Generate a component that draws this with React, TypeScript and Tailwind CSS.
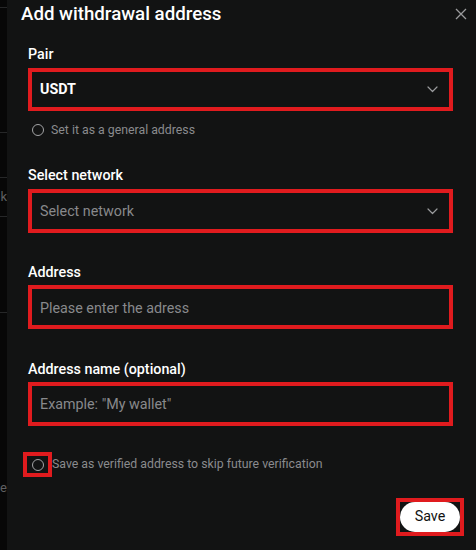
import React from 'react';

const Chevron = () => (
    <svg width="11" height="7" viewBox="0 0 11 7" fill="none" className="shrink-0">
        <path d="M1 1l4.5 4.5L10 1" stroke="#9a9b9d" strokeWidth="1.2" strokeLinecap="round" strokeLinejoin="round" />
    </svg>
);

const Radio = () => <span className="inline-block h-3 w-3 shrink-0 rounded-full border border-[#a3a4a6]" />;

export default function App() {
    return (
        <div className="flex h-[550px] w-[476px] overflow-hidden bg-[#0b0b0b] text-white" style={{ fontFamily: 'Roboto, "Noto Sans", sans-serif' }}>
            {/* page behind the dialog, only a sliver shows */}
            <div className="flex w-[7px] shrink-0 flex-col overflow-hidden bg-[#070707] text-[13px] text-[#5f6062]">
                <div className="h-[8px] border-b border-[#262728]" />
                <div className="h-[125px] border-b border-[#262728]" />
                <div className="h-[45px] border-b border-[#262728]" />
                <div className="flex h-[39px] items-center justify-end border-b border-[#262728]">k</div>
                <div className="h-[96px] border-b border-[#262728]" />
                <div className="flex h-[186px] items-end justify-end pb-[2px]">e</div>
            </div>

            {/* dialog */}
            <div className="flex flex-1 flex-col bg-[#121313]">
                <div className="flex items-start justify-between pl-[14px] pr-[9px]">
                    <h1 className="text-[18.7px] font-medium leading-7">Add withdrawal address</h1>
                    <svg width="12" height="12" viewBox="0 0 12 12" className="mt-[8px]">
                        <path d="M1 1l10 10M11 1L1 11" stroke="#9a9b9d" strokeWidth="1.3" />
                    </svg>
                </div>

                <div className="flex flex-col pl-[21px] pr-[23px]">
                    <label className="mt-[16px] text-[14.3px] font-medium leading-5">Pair</label>
                    <div className="mt-[4px] flex h-[43px] items-center justify-between border-4 border-[#e01b1e] pl-[8px] pr-[11px]">
                        <span className="text-[14.3px] font-bold">USDT</span>
                        <Chevron />
                    </div>
                    <div className="mt-[11px] flex h-4 items-center gap-[7px] pl-[4px] text-[12.3px] text-[#8a8b8e]">
                        <Radio />
                        <span>Set it as a general address</span>
                    </div>

                    <label className="mt-[27px] text-[14.3px] font-medium leading-5">Select network</label>
                    <div className="mt-[4px] flex h-[44px] items-center justify-between border-4 border-[#e01b1e] pl-[8px] pr-[11px] pt-[1px]">
                        <span className="text-[14.3px] text-[#88898c]">Select network</span>
                        <Chevron />
                    </div>

                    <label className="mt-[29px] text-[14.3px] font-medium leading-5">Address</label>
                    <div className="mt-[3px] flex h-[44px] items-center border-4 border-[#e01b1e] pl-[8px] pt-[4px]">
                        <span className="text-[14.3px] text-[#88898c]">Please enter the adress</span>
                    </div>

                    <label className="mt-[30px] text-[14.3px] font-medium leading-5">Address name (optional)</label>
                    <div className="mt-[3px] flex h-[44px] items-center border-4 border-[#e01b1e] pl-[8px] pt-[2px]">
                        <span className="text-[14.3px] text-[#88898c]">Example: "My wallet"</span>
                    </div>
                </div>

                <div className="ml-[16px] mt-[26px] flex items-center text-[12.3px] text-[#8a8b8e]">
                    <div className="flex h-[25px] w-[29px] items-center justify-center border-4 border-[#e01b1e]">
                        <Radio />
                    </div>
                    <span>Save as verified address to skip future verification</span>
                </div>

                <div className="mr-[12px] mt-[21px] flex justify-end">
                    <div className="border-4 border-[#e01b1e] bg-[#121313]">
                        <button className="h-[30px] w-[60px] rounded-full bg-white text-[14.3px] text-[#111]">Save</button>
                    </div>
                </div>
            </div>
        </div>
    );
}
